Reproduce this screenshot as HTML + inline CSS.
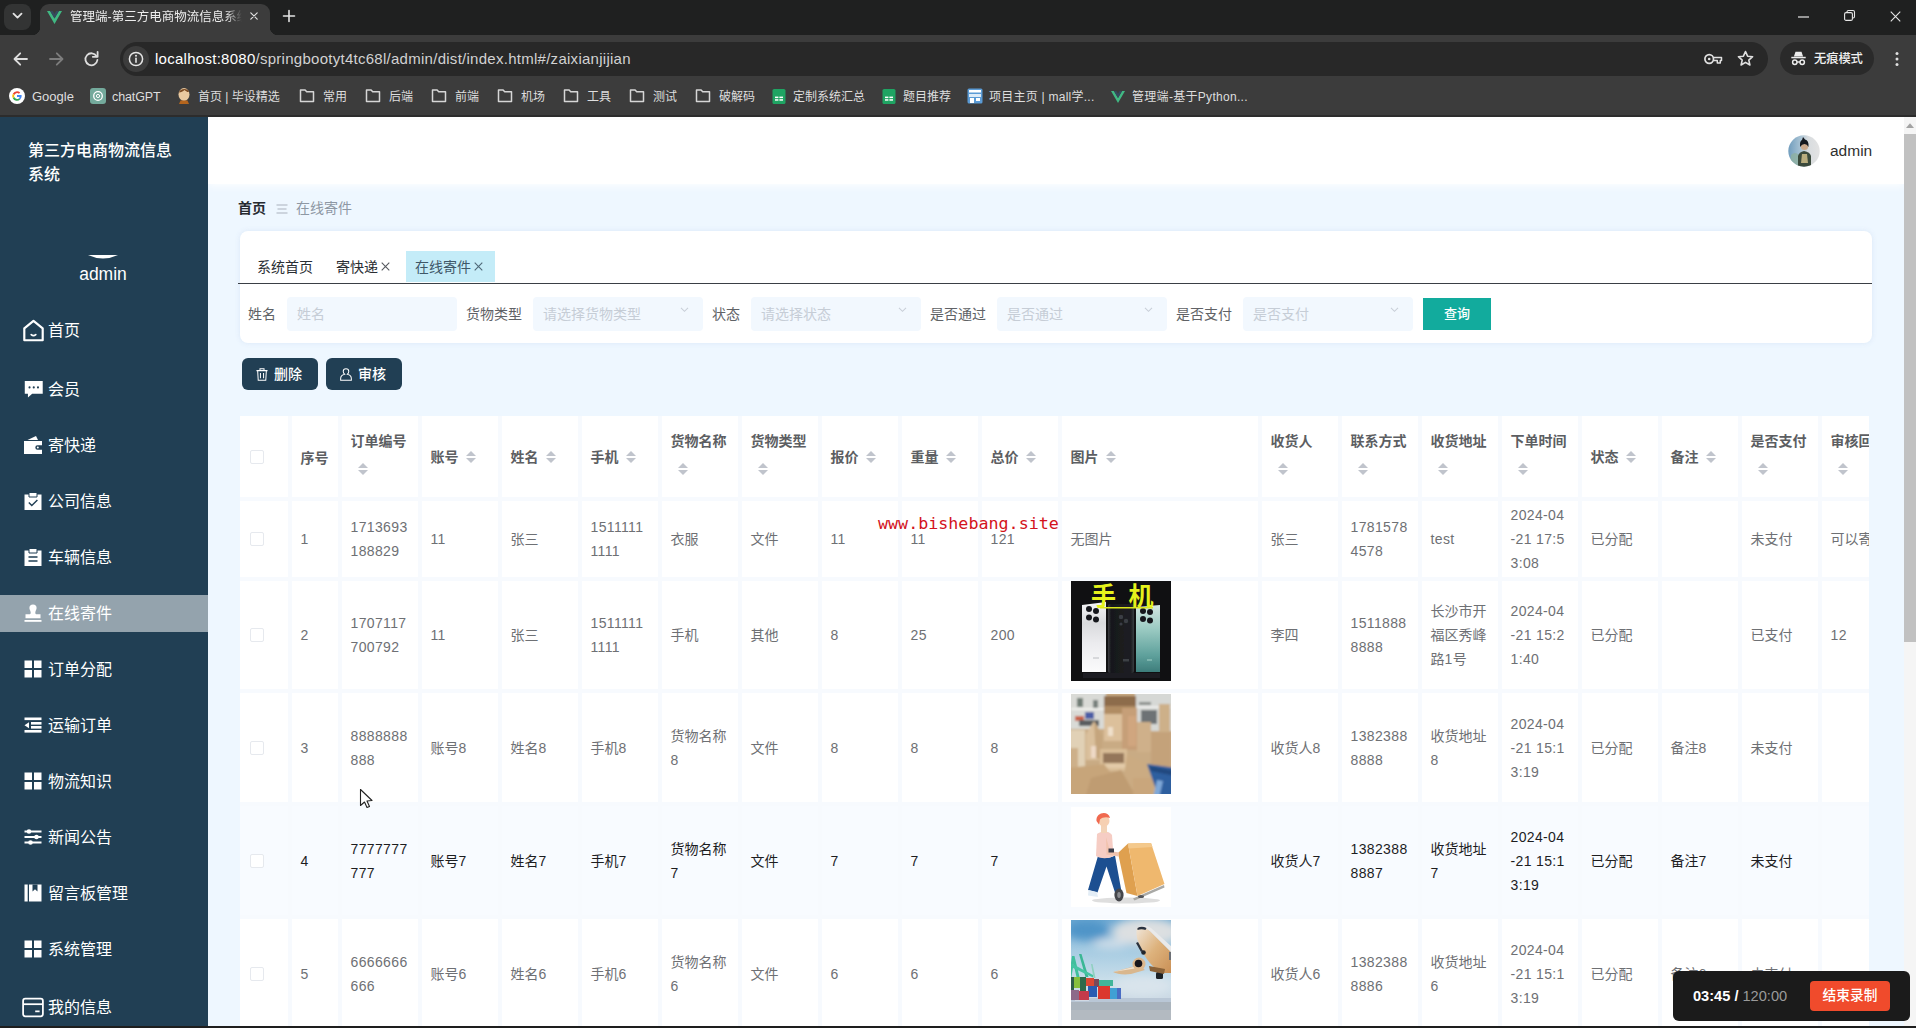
<!DOCTYPE html>
<html lang="zh-CN">
<head>
<meta charset="utf-8">
<title>管理端-第三方电商物流信息系统</title>
<style>
*{box-sizing:border-box;margin:0;padding:0}
html,body{width:1916px;height:1028px;overflow:hidden;background:#eef7ff}
body{position:relative;font-family:"Liberation Sans","Noto Sans CJK SC",sans-serif;font-size:14px;color:#606266}
.a{position:absolute;white-space:nowrap}
svg{position:absolute;overflow:visible}
/* browser chrome */
#chrome{position:absolute;left:0;top:0;width:1916px;height:117px;z-index:5;border-bottom:2px solid #2c2c2c;background:#3c3c3c;color:#e3e3e3}
#tabstrip{position:absolute;left:0;top:0;width:1916px;height:35px;background:#1f2020}
#tab{position:absolute;left:40px;top:4px;width:230px;height:31px;background:#3c3c3c;border-radius:9px 9px 0 0}
#tab:before,#tab:after{content:"";position:absolute;bottom:0;width:8px;height:8px}
#tab:before{left:-8px;background:radial-gradient(circle at 0 0,transparent 8px,#3c3c3c 8.5px)}
#tab:after{right:-8px;background:radial-gradient(circle at 100% 0,transparent 8px,#3c3c3c 8.5px)}
#urlbar{position:absolute;left:120px;top:42px;width:1648px;height:34px;border-radius:17px;background:#282828}
.bm{position:absolute;top:88px;height:18px;line-height:18px;font-size:12px;color:#dedede;white-space:nowrap}
/* sidebar */
#side{z-index:2;position:absolute;left:0;top:116px;width:208px;height:912px;background:#213f54;color:#fff}
.mi{position:absolute;left:0;width:208px;height:37px;line-height:37px;font-size:16px;color:#fff;padding-left:48px;white-space:nowrap}
.mi svg{left:22px;top:8px;width:22px;height:22px}
.mi.act{background:#94a3ad}
/* main */
#hdr{position:absolute;left:208px;top:116px;width:1696px;height:68px;background:#fff;box-shadow:0 2px 8px rgba(255,255,255,.9)}
#sb{position:absolute;left:1904px;top:116px;width:12px;height:912px;background:#f5f5f5}
#sbt{position:absolute;left:0;top:18px;width:12px;height:508px;background:#c1c1c1}
#card{position:absolute;left:240px;top:231px;width:1632px;height:112px;background:#fff;border-radius:8px;box-shadow:0 0 5px rgba(215,228,245,.9)}
.lbl{position:absolute;top:304px;height:20px;line-height:20px;font-size:14px;color:#606266;white-space:nowrap}
.inp{position:absolute;top:297px;width:170px;height:34px;background:#f2f8fe;border-radius:4px;font-size:14px;color:#c6cdd6;line-height:34px;padding-left:10px;white-space:nowrap}
.btn{position:absolute;top:358px;width:76px;height:32px;border-radius:6px;background:#213f54;color:#fff;font-size:14px;line-height:33px;white-space:nowrap;font-weight:500}
/* table */
#tbl{position:absolute;left:240px;top:416px;width:1629px;height:612px;overflow:hidden;background:#f7fafe}
.c{position:absolute;background:#fff;border:2px solid #f7fafe;font-size:14px;line-height:24px;color:#6e7074;padding-left:8px;padding-right:6px;display:flex;align-items:center;overflow:hidden;word-break:break-all}
.c.h{font-weight:bold;color:#5c5e62;font-size:14px;line-height:23px;border-top-width:0}
.c.c0{border-left-width:0}
.c.hv{background:#f8fbff;color:#1d1d1f}
.cb{display:block;width:14px;height:14px;border:1px solid #e6e9ee;border-radius:2px;background:#fff;margin-left:1px}
.so{display:inline-block;position:relative;width:14px;height:23px;vertical-align:middle;margin-left:3px}
.so:before,.so:after{content:"";position:absolute;left:3px;border:4.5px solid transparent}
.so:before{top:2px;border-bottom-color:#c0c4cc}
.so:after{top:12.5px;border-top-color:#c0c4cc}

.c{padding-left:8.5px}
.c>div{white-space:nowrap}
.n{letter-spacing:.36px}
.s13{font-size:14px}
.c.h>div{padding-top:3px}
.c.ic{padding:0}

.so{display:inline-block;position:relative;width:24px;height:34px;vertical-align:middle;margin:0}
.so:before,.so:after{content:"";position:absolute;left:7px;border:5px solid transparent}
.so:before{top:5px;border-bottom-color:#c0c4cc}
.so:after{top:auto;bottom:7px;border-top-color:#c0c4cc}
</style>
</head>
<body>
<div id="chrome"><div id="tabstrip"></div>
<div class="a" style="left:4px;top:4px;width:27px;height:26px;border-radius:8px;background:#333434"></div>
<svg style="left:12px;top:12px" width="11" height="8" viewBox="0 0 11 8"><path d="M1.5 1.6l4 4 4-4" fill="none" stroke="#e3e3e3" stroke-width="1.8" stroke-linecap="round" stroke-linejoin="round"/></svg>
<div id="tab"></div>
<svg style="left:47px;top:10px" width="15" height="15" viewBox="0 0 16 14"><path d="M0 0h3.3L8 8.1 12.7 0H16L8 13.9z" fill="#41b883"/><path d="M3.3 0h2.9L8 3.2 9.8 0h2.9L8 8.1z" fill="#35495e"/></svg>
<div class="a" style="left:70px;top:7px;width:172px;height:20px;line-height:20px;font-size:12.5px;color:#ececec;overflow:hidden;letter-spacing:0;-webkit-mask-image:linear-gradient(90deg,#000 156px,transparent 172px)">管理端-第三方电商物流信息系统</div>
<svg style="left:250px;top:12px" width="8" height="8" viewBox="0 0 10 10"><path d="M1 1l8 8M9 1l-8 8" stroke="#e3e3e3" stroke-width="1.5" stroke-linecap="round"/></svg>
<svg style="left:283px;top:10px" width="12" height="12" viewBox="0 0 12 12"><path d="M6 0.5v11M0.5 6h11" stroke="#e3e3e3" stroke-width="1.6" stroke-linecap="round"/></svg>
<svg style="left:1798px;top:16px" width="11" height="2" viewBox="0 0 11 2"><path d="M0 1h11" stroke="#e6e6e6" stroke-width="1.2"/></svg>
<svg style="left:1844px;top:10px" width="11" height="11" viewBox="0 0 11 11"><rect x="0.6" y="2.6" width="7.8" height="7.8" rx="1.5" fill="none" stroke="#e6e6e6" stroke-width="1.1"/><path d="M3 2.4V2a1.5 1.5 0 0 1 1.5-1.5H9A1.5 1.5 0 0 1 10.5 2v4.5A1.5 1.5 0 0 1 9 8h-.4" fill="none" stroke="#e6e6e6" stroke-width="1.1"/></svg>
<svg style="left:1890px;top:10.5px" width="11" height="11" viewBox="0 0 12 12"><path d="M0.8 0.8l10.4 10.4M11.2 0.8L0.8 11.2" stroke="#e6e6e6" stroke-width="1.2"/></svg>
<svg style="left:13px;top:52px" width="15" height="14" viewBox="0 0 15 14"><path d="M14 7H2M7.2 1.3L1.5 7l5.7 5.7" fill="none" stroke="#dedede" stroke-width="1.8" stroke-linecap="round" stroke-linejoin="round"/></svg>
<svg style="left:49px;top:52px" width="15" height="14" viewBox="0 0 15 14"><path d="M1 7h12M7.8 1.3L13.5 7l-5.7 5.7" fill="none" stroke="#7d7d7d" stroke-width="1.8" stroke-linecap="round" stroke-linejoin="round"/></svg>
<svg style="left:84px;top:51px" width="15" height="16" viewBox="0 0 15 16"><path d="M12.6 5.2A6 6 0 1 0 13.4 9" fill="none" stroke="#dedede" stroke-width="1.8" stroke-linecap="round"/><path d="M13.6 1v4.8H8.8" fill="none" stroke="#dedede" stroke-width="1.8" stroke-linecap="round" stroke-linejoin="round"/></svg>
<div id="urlbar"></div>
<div class="a" style="left:123px;top:46px;width:26px;height:26px;border-radius:13px;background:#3c3c3c"></div>
<svg style="left:128px;top:51px" width="16" height="16" viewBox="0 0 16 16"><circle cx="8" cy="8" r="6.6" fill="none" stroke="#e6e6e6" stroke-width="1.5"/><path d="M8 7.2v4" stroke="#e6e6e6" stroke-width="1.6" stroke-linecap="round"/><circle cx="8" cy="4.8" r="1" fill="#e6e6e6"/></svg>
<div class="a" id="url" style="left:155px;top:49px;height:20px;line-height:20px;font-size:15px;color:#e6e6e6;letter-spacing:.27px"><span style="color:#fff">localhost:8080</span><span style="color:#d2d2d2">/springbootyt4tc68l/admin/dist/index.html#/zaixianjijian</span></div>
<svg style="left:1704px;top:53px" width="19" height="12" viewBox="0 0 19 12"><circle cx="5.2" cy="6" r="4.3" fill="none" stroke="#e0e0e0" stroke-width="1.7"/><circle cx="5.2" cy="6" r="1.3" fill="#e0e0e0"/><path d="M9.5 4.6h8v3h-1.2v2.3h-3V7.4H9.5" fill="none" stroke="#e0e0e0" stroke-width="1.5" stroke-linejoin="round"/></svg>
<svg style="left:1737px;top:50px" width="17" height="17" viewBox="0 0 17 17"><path d="M8.5 1.6l2.1 4.6 5 .5-3.8 3.4 1.1 4.9-4.4-2.6L4.1 15l1.1-4.9L1.4 6.7l5-.5z" fill="none" stroke="#e0e0e0" stroke-width="1.6" stroke-linejoin="round"/></svg>
<div class="a" style="left:1780px;top:42px;width:94px;height:33px;border-radius:17px;background:#2a2a2a"></div>
<svg style="left:1791px;top:51px" width="15" height="15" viewBox="0 0 15 15"><path d="M4.5 0.8h6l1.6 4.6H2.9z" fill="#ececec"/><rect x="0.3" y="5.8" width="14.4" height="1.5" fill="#ececec"/><circle cx="3.8" cy="11.3" r="2.2" fill="none" stroke="#ececec" stroke-width="1.5"/><circle cx="11.2" cy="11.3" r="2.2" fill="none" stroke="#ececec" stroke-width="1.5"/><path d="M6 11h3" stroke="#ececec" stroke-width="1.4"/></svg>
<div class="a" style="left:1814px;top:49px;height:20px;line-height:20px;font-size:12.3px;color:#f0f0f0;font-weight:500;letter-spacing:-.1px">无痕模式</div>
<svg style="left:1895px;top:51px" width="4" height="16" viewBox="0 0 4 16"><circle cx="2" cy="2.4" r="1.5" fill="#e0e0e0"/><circle cx="2" cy="8" r="1.5" fill="#e0e0e0"/><circle cx="2" cy="13.6" r="1.5" fill="#e0e0e0"/></svg>
<svg style="left:9px;top:88px" width="16" height="16" viewBox="0 0 16 16"><circle cx="8" cy="8" r="8" fill="#fff"/><path d="M8 3.3a4.7 4.7 0 0 1 3.2 1.2l-1.3 1.3A2.9 2.9 0 0 0 5.3 7L3.8 5.8A4.7 4.7 0 0 1 8 3.3z" fill="#ea4335"/><path d="M3.8 5.8L5.3 7a2.9 2.9 0 0 0 0 2l-1.5 1.2a4.7 4.7 0 0 1 0-4.4z" fill="#fbbc05"/><path d="M3.8 10.2L5.3 9A2.9 2.9 0 0 0 9.7 10.4l1.5 1.2a4.7 4.7 0 0 1-7.4-1.4z" fill="#34a853"/><path d="M12.6 7.1H8v1.8h2.7a2.3 2.3 0 0 1-1 1.5l1.5 1.2a4.7 4.7 0 0 0 1.4-4.5z" fill="#4285f4"/></svg>
<div class="bm" style="left:32px;font-size:13px;letter-spacing:0">Google</div>
<svg style="left:90px;top:88px" width="16" height="16" viewBox="0 0 16 16"><rect width="16" height="16" rx="3" fill="#74aa9c"/><circle cx="8" cy="8" r="4.3" fill="none" stroke="#fff" stroke-width="1.3"/><circle cx="8" cy="8" r="1.6" fill="none" stroke="#fff" stroke-width="1"/></svg>
<div class="bm" style="left:112px;font-size:12.5px;letter-spacing:-.1px">chatGPT</div>
<svg style="left:176px;top:87px" width="16" height="17" viewBox="0 0 16 17"><ellipse cx="8" cy="7.5" rx="5.5" ry="6.5" fill="#e9c9a0"/><path d="M3 5.5C3.5 1.5 12 0.5 13 5c-2 .5-3-1-4.5-2C7 4.5 5 5.5 3 5.5z" fill="#7a4a22"/><path d="M4.5 13.5h7l1.5 3.5h-10z" fill="#b5651d"/></svg>
<div class="bm" style="left:198px">首页 | 毕设精选</div>
<svg style="left:299px;top:89px" width="16" height="14" viewBox="0 0 16 14"><path d="M1.5 1h4.6l1.6 1.8h6.8v9.7h-13z" fill="none" stroke="#d6d6d6" stroke-width="1.5" stroke-linejoin="round"/></svg>
<div class="bm" style="left:323px">常用</div>
<svg style="left:365px;top:89px" width="16" height="14" viewBox="0 0 16 14"><path d="M1.5 1h4.6l1.6 1.8h6.8v9.7h-13z" fill="none" stroke="#d6d6d6" stroke-width="1.5" stroke-linejoin="round"/></svg>
<div class="bm" style="left:389px">后端</div>
<svg style="left:431px;top:89px" width="16" height="14" viewBox="0 0 16 14"><path d="M1.5 1h4.6l1.6 1.8h6.8v9.7h-13z" fill="none" stroke="#d6d6d6" stroke-width="1.5" stroke-linejoin="round"/></svg>
<div class="bm" style="left:455px">前端</div>
<svg style="left:497px;top:89px" width="16" height="14" viewBox="0 0 16 14"><path d="M1.5 1h4.6l1.6 1.8h6.8v9.7h-13z" fill="none" stroke="#d6d6d6" stroke-width="1.5" stroke-linejoin="round"/></svg>
<div class="bm" style="left:521px">机场</div>
<svg style="left:563px;top:89px" width="16" height="14" viewBox="0 0 16 14"><path d="M1.5 1h4.6l1.6 1.8h6.8v9.7h-13z" fill="none" stroke="#d6d6d6" stroke-width="1.5" stroke-linejoin="round"/></svg>
<div class="bm" style="left:587px">工具</div>
<svg style="left:629px;top:89px" width="16" height="14" viewBox="0 0 16 14"><path d="M1.5 1h4.6l1.6 1.8h6.8v9.7h-13z" fill="none" stroke="#d6d6d6" stroke-width="1.5" stroke-linejoin="round"/></svg>
<div class="bm" style="left:653px">测试</div>
<svg style="left:695px;top:89px" width="16" height="14" viewBox="0 0 16 14"><path d="M1.5 1h4.6l1.6 1.8h6.8v9.7h-13z" fill="none" stroke="#d6d6d6" stroke-width="1.5" stroke-linejoin="round"/></svg>
<div class="bm" style="left:719px">破解码</div>
<svg style="left:772px;top:89px" width="14" height="15" viewBox="0 0 14 15"><rect x="0.5" y="0" width="13" height="15" rx="1.6" fill="#1fa463"/><rect x="3" y="7.6" width="3.4" height="1.5" fill="#fff"/><rect x="7.4" y="7.6" width="3.6" height="1.5" fill="#fff"/><rect x="3" y="10.2" width="3.4" height="1.5" fill="#fff"/><rect x="7.4" y="10.2" width="3.6" height="1.5" fill="#fff"/></svg>
<div class="bm" style="left:793px">定制系统汇总</div>
<svg style="left:882px;top:89px" width="14" height="15" viewBox="0 0 14 15"><rect x="0.5" y="0" width="13" height="15" rx="1.6" fill="#1fa463"/><rect x="3" y="7.6" width="3.4" height="1.5" fill="#fff"/><rect x="7.4" y="7.6" width="3.6" height="1.5" fill="#fff"/><rect x="3" y="10.2" width="3.4" height="1.5" fill="#fff"/><rect x="7.4" y="10.2" width="3.6" height="1.5" fill="#fff"/></svg>
<div class="bm" style="left:903px">题目推荐</div>
<svg style="left:967px;top:88px" width="16" height="16" viewBox="0 0 16 16"><rect x="0.5" y="0.5" width="15" height="15" rx="1.5" fill="#5b9bd5"/><rect x="2" y="2" width="12" height="2.5" fill="#fff"/><path d="M2 6h12v3H2z" fill="#dcebf8"/><rect x="3" y="10" width="4" height="5" fill="#fff"/><rect x="9" y="10" width="4" height="3" fill="#fff"/></svg>
<div class="bm" style="left:989px;letter-spacing:.25px">项目主页 | mall学...</div>
<svg style="left:1111px;top:90px" width="14" height="14" viewBox="0 0 16 14"><path d="M0 0h3.3L8 8.1 12.7 0H16L8 13.9z" fill="#41b883"/><path d="M3.3 0h2.9L8 3.2 9.8 0h2.9L8 8.1z" fill="#35495e"/></svg>
<div class="bm" style="left:1132px;letter-spacing:.3px">管理端-基于Python...</div>
</div>
<div id="side">
<div class="a" style="left:28px;top:22.5px;width:160px;white-space:normal;font-size:16px;line-height:24px;color:#fff;font-weight:500">第三方电商物流信息<br>系统</div>
<svg style="left:88px;top:139px" width="30" height="4" viewBox="0 0 30 4"><path d="M0 0h30Q15 7 0 0z" fill="#fff"/></svg>
<div class="a" style="left:0;top:146px;width:206px;text-align:center;font-size:17.5px;line-height:24px;color:#fff">admin</div>
<div class="mi" style="top:196px"><svg viewBox="0 0 18 18" style="left:21.5px;top:6.5px;width:23px;height:23px"><path d="M9 1.5L1.8 7.4V16.6H16.2V7.4z" fill="none" stroke="#fff" stroke-width="1.7" stroke-linejoin="round"/><path d="M7.2 12.2c1 .9 2.6.9 3.6 0" fill="none" stroke="#fff" stroke-width="1.3" stroke-linecap="round"/></svg>首页</div>
<div class="mi" style="top:255px"><svg viewBox="0 0 18 18" style="left:23.5px;top:9px;width:19.5px;height:19px"><path d="M0.5 1h17v12H7.5L3.5 16.5V13H0.5z" fill="#fff"/><circle cx="5" cy="7" r="1" fill="#213f54"/><circle cx="9" cy="7" r="1" fill="#213f54"/><circle cx="13" cy="7" r="1" fill="#213f54"/></svg>会员</div>
<div class="mi" style="top:311px"><svg viewBox="0 0 18 18" style="left:24px;top:9px;width:18px;height:18px"><path d="M0 5h18v13H0z" fill="#fff"/><path d="M3.5 4L12 0l2 4z" fill="#fff"/><path d="M18 9.3h-4.5a2.2 2.2 0 0 0 0 4.4H18z" fill="#213f54"/><circle cx="13.8" cy="11.5" r="1" fill="#fff"/></svg>寄快递</div>
<div class="mi" style="top:367px"><svg viewBox="0 0 18 18" style="left:24px;top:9px;width:18px;height:18px"><path d="M0.5 2.5h17V18h-17z" fill="#fff"/><path d="M5 0.5h8V5H5z" fill="#fff" stroke="#213f54" stroke-width="1"/><path d="M4.8 10.5l3 3 5.6-5.6" fill="none" stroke="#213f54" stroke-width="1.4"/></svg>公司信息</div>
<div class="mi" style="top:423px"><svg viewBox="0 0 18 18" style="left:24px;top:9px;width:18px;height:18px"><path d="M0.5 2.5h17V18h-17z" fill="#fff"/><path d="M5 0.5h8V5H5z" fill="#fff" stroke="#213f54" stroke-width="1"/><path d="M4.5 9h9M4.5 13h9" stroke="#213f54" stroke-width="1.6"/></svg>车辆信息</div>
<div class="mi act" style="top:479px"><svg viewBox="0 0 18 18" style="left:24px;top:9px;width:18px;height:18px"><path d="M9 0.5a3.6 3.6 0 0 1 3.6 3.6c0 1.8-1.3 2.8-1.3 4.6 0 1 .6 1.6 1.6 1.6H16.5v4h-15v-4h3.6c1 0 1.6-.6 1.6-1.6 0-1.8-1.3-2.8-1.3-4.6A3.6 3.6 0 0 1 9 0.5z" fill="#fff"/><rect x="0.5" y="16" width="17" height="1.8" fill="#fff"/></svg>在线寄件</div>
<div class="mi" style="top:535px"><svg viewBox="0 0 18 18" style="left:24px;top:9px;width:18px;height:18px"><rect x="0.5" y="0.5" width="7.5" height="7.5" fill="#fff"/><rect x="10" y="0.5" width="7.5" height="7.5" fill="#fff"/><rect x="0.5" y="10" width="7.5" height="7.5" fill="#fff"/><rect x="10" y="10" width="7.5" height="7.5" fill="#fff"/></svg>订单分配</div>
<div class="mi" style="top:591px"><svg viewBox="0 0 18 18" style="left:24px;top:9px;width:18px;height:18px"><rect x="0.5" y="1.5" width="17" height="2.6" fill="#fff"/><rect x="7" y="6" width="10.5" height="2.6" fill="#fff"/><rect x="7" y="10" width="10.5" height="2.6" fill="#fff"/><rect x="0.5" y="14" width="17" height="2.6" fill="#fff"/><path d="M0.5 9.3L5 6.3v6z" fill="#fff"/></svg>运输订单</div>
<div class="mi" style="top:647px"><svg viewBox="0 0 18 18" style="left:24px;top:9px;width:18px;height:18px"><rect x="0.5" y="0.5" width="7.5" height="7.5" fill="#fff"/><rect x="10" y="0.5" width="7.5" height="7.5" fill="#fff"/><rect x="0.5" y="10" width="7.5" height="7.5" fill="#fff"/><rect x="10" y="10" width="7.5" height="7.5" fill="#fff"/></svg>物流知识</div>
<div class="mi" style="top:703px"><svg viewBox="0 0 18 18" style="left:24px;top:9px;width:18px;height:18px"><path d="M0.5 3.5h17M0.5 9h17M0.5 14.5h17" stroke="#fff" stroke-width="1.8"/><circle cx="5" cy="3.5" r="2.3" fill="#fff"/><circle cx="12.5" cy="9" r="2.3" fill="#fff"/><circle cx="6.5" cy="14.5" r="2.3" fill="#fff"/></svg>新闻公告</div>
<div class="mi" style="top:759px"><svg viewBox="0 0 18 18" style="left:24px;top:9px;width:18px;height:18px"><rect x="0.5" y="0.5" width="3.2" height="17" fill="#fff"/><path d="M5 0.5h12.5v17H5z" fill="#fff"/><path d="M8.5 0.5v7l2.5-2.2 2.5 2.2v-7z" fill="#213f54"/></svg>留言板管理</div>
<div class="mi" style="top:815px"><svg viewBox="0 0 18 18" style="left:24px;top:9px;width:18px;height:18px"><rect x="0.5" y="0.5" width="7.5" height="7.5" fill="#fff"/><rect x="10" y="0.5" width="7.5" height="7.5" fill="#fff"/><rect x="0.5" y="10" width="7.5" height="7.5" fill="#fff"/><rect x="10" y="10" width="7.5" height="7.5" fill="#fff"/></svg>系统管理</div>
<div class="mi" style="top:873px"><svg viewBox="0 0 20 19" style="left:22px;top:8px;width:22px;height:21px"><rect x="1" y="1.5" width="18" height="16" rx="2" fill="none" stroke="#fff" stroke-width="1.6"/><path d="M1 6.5h18" stroke="#fff" stroke-width="1.6"/><path d="M12 13h4" stroke="#fff" stroke-width="1.6"/></svg>我的信息</div>
</div>
<div id="hdr"></div>
<svg style="left:1787.5px;top:135px" width="32" height="32" viewBox="0 0 32 32"><defs><clipPath id="av"><circle cx="16" cy="16" r="15.7"/></clipPath><linearGradient id="avg" x1="0" y1="0" x2="1" y2="0"><stop offset="0" stop-color="#6f9cbd"/><stop offset=".4" stop-color="#a9c3d4"/><stop offset=".62" stop-color="#d8dcdf"/><stop offset="1" stop-color="#e3e3e3"/></linearGradient></defs><g clip-path="url(#av)"><rect width="32" height="32" fill="url(#avg)"/><path d="M3 20q4-4 8 0l2 12H2z" fill="#8fb0a0" opacity=".8"/><path d="M10 32V21q1-4 6-5 6 1 7 5v11z" fill="#3b4a3c"/><path d="M14 19h5l1 9h-7z" fill="#b9ad7e"/><circle cx="16.5" cy="11.5" r="3.6" fill="#caa98c"/><path d="M12 12q-.5-6 2-7l1-3 2 2.5q4 .5 3.5 7.5-1.5-3-4-3t-4.5 3z" fill="#14181f"/></g></svg>
<div class="a" style="left:1830px;top:140px;height:22px;line-height:22px;font-size:15.5px;color:#2f2f2f">admin</div>
<div class="a" style="left:238px;top:198px;height:20px;line-height:20px;font-size:14px;font-weight:bold;color:#262a30">首页</div>
<svg style="left:276px;top:204px" width="12" height="10" viewBox="0 0 12 10"><path d="M0.5 1h11M1.5 5h9M0.5 9h11" stroke="#a9b2bd" stroke-width="1.1"/></svg>
<div class="a" style="left:296px;top:198px;height:20px;line-height:20px;font-size:14px;color:#8e98a4">在线寄件</div>
<div id="card"></div>
<div class="a" style="left:238px;top:283px;width:1634px;height:1px;background:#3a3f45"></div>
<div class="a" style="left:257px;top:257px;height:20px;line-height:20px;font-size:14px;color:#2a2e33">系统首页</div>
<div class="a" style="left:336px;top:257px;height:20px;line-height:20px;font-size:14px;color:#2a2e33">寄快递</div>
<svg style="left:381px;top:262px" width="9" height="9" viewBox="0 0 9 9"><path d="M0.7 0.7l7.6 7.6M8.3 0.7L0.7 8.3" stroke="#55595f" stroke-width="1.1"/></svg>
<div class="a" style="left:406px;top:251px;width:89px;height:31px;background:#c4ecf8"></div>
<div class="a" style="left:415px;top:257px;height:20px;line-height:20px;font-size:14px;color:#3f5868">在线寄件</div>
<svg style="left:474px;top:262px" width="9" height="9" viewBox="0 0 9 9"><path d="M0.7 0.7l7.6 7.6M8.3 0.7L0.7 8.3" stroke="#4f6878" stroke-width="1.1"/></svg>
<div class="lbl" style="left:248px">姓名</div>
<div class="inp" style="left:287px">姓名</div>
<div class="lbl" style="left:466px">货物类型</div>
<div class="inp" style="left:533px">请选择货物类型</div><svg style="left:679.5px;top:306.5px" width="9" height="5.5" viewBox="0 0 11 7"><path d="M1 1l4.5 4.5L10 1" fill="none" stroke="#c9cfd8" stroke-width="1.3"/></svg>
<div class="lbl" style="left:712px">状态</div>
<div class="inp" style="left:751px">请选择状态</div><svg style="left:897.5px;top:306.5px" width="9" height="5.5" viewBox="0 0 11 7"><path d="M1 1l4.5 4.5L10 1" fill="none" stroke="#c9cfd8" stroke-width="1.3"/></svg>
<div class="lbl" style="left:930px">是否通过</div>
<div class="inp" style="left:997px">是否通过</div><svg style="left:1143.5px;top:306.5px" width="9" height="5.5" viewBox="0 0 11 7"><path d="M1 1l4.5 4.5L10 1" fill="none" stroke="#c9cfd8" stroke-width="1.3"/></svg>
<div class="lbl" style="left:1176px">是否支付</div>
<div class="inp" style="left:1243px">是否支付</div><svg style="left:1389.5px;top:306.5px" width="9" height="5.5" viewBox="0 0 11 7"><path d="M1 1l4.5 4.5L10 1" fill="none" stroke="#c9cfd8" stroke-width="1.3"/></svg>
<div class="a" style="left:1423px;top:298px;width:68px;height:32px;background:#12ab9d;color:#fff;font-size:13px;line-height:32px;text-align:center;font-weight:500">查询</div>
<div class="btn" style="left:242px;padding-left:32px">删除</div>
<svg style="left:255.5px;top:368px" width="12" height="13" viewBox="0 0 13 14"><path d="M0.5 2.8h12M4.3 2.5V0.8h4.4v1.7M1.8 3l.6 10.2h8.2L11.2 3M4.8 5.5v5.5M8.2 5.5v5.5" fill="none" stroke="#fff" stroke-width="1.1"/></svg>
<div class="btn" style="left:326px;padding-left:32px">审核</div>
<svg style="left:339.5px;top:368px" width="12" height="13" viewBox="0 0 13 14"><path d="M6.5 0.7a3 3 0 0 1 3 3c0 1.5-.9 2.5-1.5 3 2.5.5 4.3 2.3 4.3 4.8v1.8H0.7v-1.8c0-2.5 1.8-4.3 4.3-4.8-.6-.5-1.5-1.5-1.5-3a3 3 0 0 1 3-3z" fill="none" stroke="#fff" stroke-width="1.1"/></svg>
<div id="sb"><div id="sbt"></div><svg style="left:2px;top:7px" width="8" height="5" viewBox="0 0 8 5"><path d="M4 0.3L8 5h-8z" fill="#a3a3a3"/></svg></div>
<div id="tbl">
<div class="c h c0" style="left:0px;top:0px;width:50px;height:83px"><i class="cb"></i></div>
<div class="c h" style="left:50px;top:0px;width:50px;height:83px"><div>序号</div></div>
<div class="c h" style="left:100px;top:0px;width:80px;height:83px"><div>订单编号<br><i class="so"></i></div></div>
<div class="c h" style="left:180px;top:0px;width:80px;height:83px"><div>账号<i class="so"></i></div></div>
<div class="c h" style="left:260px;top:0px;width:80px;height:83px"><div>姓名<i class="so"></i></div></div>
<div class="c h" style="left:340px;top:0px;width:80px;height:83px"><div>手机<i class="so"></i></div></div>
<div class="c h" style="left:420px;top:0px;width:80px;height:83px"><div>货物名称<br><i class="so"></i></div></div>
<div class="c h" style="left:500px;top:0px;width:80px;height:83px"><div>货物类型<br><i class="so"></i></div></div>
<div class="c h" style="left:580px;top:0px;width:80px;height:83px"><div>报价<i class="so"></i></div></div>
<div class="c h" style="left:660px;top:0px;width:80px;height:83px"><div>重量<i class="so"></i></div></div>
<div class="c h" style="left:740px;top:0px;width:80px;height:83px"><div>总价<i class="so"></i></div></div>
<div class="c h" style="left:820px;top:0px;width:200px;height:83px"><div>图片<i class="so"></i></div></div>
<div class="c h" style="left:1020px;top:0px;width:80px;height:83px"><div>收货人<br><i class="so"></i></div></div>
<div class="c h" style="left:1100px;top:0px;width:80px;height:83px"><div>联系方式<br><i class="so"></i></div></div>
<div class="c h" style="left:1180px;top:0px;width:80px;height:83px"><div>收货地址<br><i class="so"></i></div></div>
<div class="c h" style="left:1260px;top:0px;width:80px;height:83px"><div>下单时间<br><i class="so"></i></div></div>
<div class="c h" style="left:1340px;top:0px;width:80px;height:83px"><div>状态<i class="so"></i></div></div>
<div class="c h" style="left:1420px;top:0px;width:80px;height:83px"><div>备注<i class="so"></i></div></div>
<div class="c h" style="left:1500px;top:0px;width:80px;height:83px"><div>是否支付<br><i class="so"></i></div></div>
<div class="c h" style="left:1580px;top:0px;width:80px;height:83px"><div>审核回复<br><i class="so"></i></div></div>
<div class="c c0" style="left:0px;top:83px;width:50px;height:80px"><i class="cb"></i></div>
<div class="c" style="left:50px;top:83px;width:50px;height:80px"><div><span class="n">1</span></div></div>
<div class="c" style="left:100px;top:83px;width:80px;height:80px"><div><span class="n">1713693<br>188829</span></div></div>
<div class="c" style="left:180px;top:83px;width:80px;height:80px"><div><span class="n">11</span></div></div>
<div class="c" style="left:260px;top:83px;width:80px;height:80px"><div>张三</div></div>
<div class="c" style="left:340px;top:83px;width:80px;height:80px"><div><span class="n">1511111<br>1111</span></div></div>
<div class="c" style="left:420px;top:83px;width:80px;height:80px"><div>衣服</div></div>
<div class="c" style="left:500px;top:83px;width:80px;height:80px"><div>文件</div></div>
<div class="c" style="left:580px;top:83px;width:80px;height:80px"><div><span class="n">11</span></div></div>
<div class="c" style="left:660px;top:83px;width:80px;height:80px"><div><span class="n">11</span></div></div>
<div class="c" style="left:740px;top:83px;width:80px;height:80px"><div><span class="n">121</span></div></div>
<div class="c" style="left:820px;top:83px;width:200px;height:80px"><div>无图片</div></div>
<div class="c" style="left:1020px;top:83px;width:80px;height:80px"><div>张三</div></div>
<div class="c" style="left:1100px;top:83px;width:80px;height:80px"><div><span class="n">1781578<br>4578</span></div></div>
<div class="c" style="left:1180px;top:83px;width:80px;height:80px"><div><span class="n">test</span></div></div>
<div class="c" style="left:1260px;top:83px;width:80px;height:80px"><div><span class="n">2024-04<br>-21 17:5<br>3:08</span></div></div>
<div class="c" style="left:1340px;top:83px;width:80px;height:80px"><div>已分配</div></div>
<div class="c" style="left:1420px;top:83px;width:80px;height:80px"><div></div></div>
<div class="c" style="left:1500px;top:83px;width:80px;height:80px"><div>未支付</div></div>
<div class="c" style="left:1580px;top:83px;width:80px;height:80px"><div>可以寄</div></div>
<div class="c c0" style="left:0px;top:163px;width:50px;height:112px"><i class="cb"></i></div>
<div class="c" style="left:50px;top:163px;width:50px;height:112px"><div><span class="n">2</span></div></div>
<div class="c" style="left:100px;top:163px;width:80px;height:112px"><div><span class="n">1707117<br>700792</span></div></div>
<div class="c" style="left:180px;top:163px;width:80px;height:112px"><div><span class="n">11</span></div></div>
<div class="c" style="left:260px;top:163px;width:80px;height:112px"><div>张三</div></div>
<div class="c" style="left:340px;top:163px;width:80px;height:112px"><div><span class="n">1511111<br>1111</span></div></div>
<div class="c" style="left:420px;top:163px;width:80px;height:112px"><div>手机</div></div>
<div class="c" style="left:500px;top:163px;width:80px;height:112px"><div>其他</div></div>
<div class="c" style="left:580px;top:163px;width:80px;height:112px"><div><span class="n">8</span></div></div>
<div class="c" style="left:660px;top:163px;width:80px;height:112px"><div><span class="n">25</span></div></div>
<div class="c" style="left:740px;top:163px;width:80px;height:112px"><div><span class="n">200</span></div></div>
<div class="c ic" style="left:820px;top:163px;width:200px;height:112px"><svg class="im" style="left:8.5px;top:0px" width="100" height="100" viewBox="0 0 100 100"><defs><filter id="b1" x="-5%" y="-5%" width="110%" height="110%"><feGaussianBlur stdDeviation=".5"/></filter>
<linearGradient id="pw" x1="0" y1="0" x2="0" y2="1"><stop offset="0" stop-color="#f4f4f6"/><stop offset=".3" stop-color="#d9dadd"/><stop offset=".6" stop-color="#ececef"/><stop offset="1" stop-color="#fbfbfc"/></linearGradient>
<linearGradient id="pt" x1="0" y1="0" x2="0" y2="1"><stop offset="0" stop-color="#d3e6e1"/><stop offset=".35" stop-color="#9ccbc3"/><stop offset=".75" stop-color="#5fa19c"/><stop offset="1" stop-color="#3d7d7b"/></linearGradient>
<linearGradient id="pb" x1="0" y1="0" x2="1" y2="0"><stop offset="0" stop-color="#3a3c40"/><stop offset=".12" stop-color="#17181b"/><stop offset=".88" stop-color="#1d1f22"/><stop offset="1" stop-color="#3a3c40"/></linearGradient></defs>
<rect width="100" height="100" fill="#101012"/>
<g filter="url(#b1)"><path d="M11 24l24-3v70H11z" fill="url(#pw)"/><rect x="37" y="23" width="26" height="69" rx="2" fill="url(#pb)"/><path d="M65 26l24-2v67H65z" fill="url(#pt)"/>
<g fill="#17191d"><circle cx="18" cy="28" r="3"/><circle cx="25" cy="30" r="3"/><circle cx="18" cy="36.5" r="3"/><circle cx="25" cy="38.5" r="3"/>
<circle cx="72" cy="30" r="3"/><circle cx="79" cy="31" r="3"/><circle cx="72" cy="38" r="3"/><circle cx="79" cy="39.5" r="3"/></g>
<g fill="#3b3e44"><circle cx="50" cy="36" r="2.2"/><circle cx="55" cy="40" r="2.2"/><circle cx="50" cy="43" r="1.6"/></g>
<rect x="52" y="78" width="6" height="2.5" fill="#3c3f44"/><rect x="22" y="76" width="6" height="2" fill="#d7d8db"/><rect x="76" y="78" width="5" height="2" fill="#7db5ae"/>
<rect x="12" y="92" width="77" height="5" fill="#1c1d20"/></g>
<text x="20" y="24" font-family="Liberation Sans,Noto Sans CJK SC,sans-serif" font-weight="bold" font-size="25" fill="#e6f31c">手</text><text x="57.5" y="24" font-family="Liberation Sans,Noto Sans CJK SC,sans-serif" font-weight="bold" font-size="25" fill="#e6f31c">机</text>
<rect x="29" y="26" width="53" height="1.5" fill="#dbe81c"/></svg></div>
<div class="c" style="left:1020px;top:163px;width:80px;height:112px"><div>李四</div></div>
<div class="c" style="left:1100px;top:163px;width:80px;height:112px"><div><span class="n">1511888<br>8888</span></div></div>
<div class="c" style="left:1180px;top:163px;width:80px;height:112px"><div><span class="s13">长沙市开<br>福区秀峰<br>路<span class="n">1</span>号</span></div></div>
<div class="c" style="left:1260px;top:163px;width:80px;height:112px"><div><span class="n">2024-04<br>-21 15:2<br>1:40</span></div></div>
<div class="c" style="left:1340px;top:163px;width:80px;height:112px"><div>已分配</div></div>
<div class="c" style="left:1420px;top:163px;width:80px;height:112px"><div></div></div>
<div class="c" style="left:1500px;top:163px;width:80px;height:112px"><div>已支付</div></div>
<div class="c" style="left:1580px;top:163px;width:80px;height:112px"><div><span class="n">12</span></div></div>
<div class="c c0" style="left:0px;top:275px;width:50px;height:113px"><i class="cb"></i></div>
<div class="c" style="left:50px;top:275px;width:50px;height:113px"><div><span class="n">3</span></div></div>
<div class="c" style="left:100px;top:275px;width:80px;height:113px"><div><span class="n">8888888<br>888</span></div></div>
<div class="c" style="left:180px;top:275px;width:80px;height:113px"><div>账号<span class="n">8</span></div></div>
<div class="c" style="left:260px;top:275px;width:80px;height:113px"><div>姓名<span class="n">8</span></div></div>
<div class="c" style="left:340px;top:275px;width:80px;height:113px"><div>手机<span class="n">8</span></div></div>
<div class="c" style="left:420px;top:275px;width:80px;height:113px"><div><span class="s13">货物名称<br><span class="n">8</span></span></div></div>
<div class="c" style="left:500px;top:275px;width:80px;height:113px"><div>文件</div></div>
<div class="c" style="left:580px;top:275px;width:80px;height:113px"><div><span class="n">8</span></div></div>
<div class="c" style="left:660px;top:275px;width:80px;height:113px"><div><span class="n">8</span></div></div>
<div class="c" style="left:740px;top:275px;width:80px;height:113px"><div><span class="n">8</span></div></div>
<div class="c ic" style="left:820px;top:275px;width:200px;height:113px"><svg class="im" style="left:8.5px;top:1px" width="100" height="100" viewBox="0 0 100 100"><defs><filter id="b2" x="-5%" y="-5%" width="110%" height="110%"><feGaussianBlur stdDeviation=".8"/></filter><clipPath id="c2"><rect width="100" height="100"/></clipPath></defs>
<g clip-path="url(#c2)"><g filter="url(#b2)"><rect x="-3" y="-3" width="106" height="106" fill="#c9ab84"/>
<rect x="-3" y="-3" width="38" height="38" fill="#d9dad6"/><rect x="64" y="-3" width="40" height="40" fill="#d6d8d5"/>
<rect x="6" y="4" width="6" height="9" fill="#6f7b74"/><rect x="22" y="6" width="5" height="8" fill="#77807c"/><rect x="0" y="14" width="33" height="2" fill="#f1f1ee"/>
<rect x="14" y="18" width="9" height="7" fill="#4b5da6"/><rect x="4" y="22" width="9" height="5" fill="#c9634a"/><rect x="8" y="26" width="20" height="6" fill="#5a5d60"/>
<rect x="68" y="8" width="12" height="3" fill="#8a8f8c"/><rect x="70" y="16" width="16" height="14" fill="#6d7274"/><rect x="66" y="12" width="34" height="2" fill="#eeeeec"/>
<rect x="88" y="10" width="11" height="38" fill="#cdb089"/>
<path d="M33 2h32v22H33z" fill="#8d6c4b"/><path d="M33 12h32v12H33z" fill="#b08c64"/>
<path d="M33 20h18v27H33z" fill="#dcc09b"/><rect x="37" y="33" width="5" height="9" fill="#efe0cb"/>
<path d="M51 14h15v42H51z" fill="#c69f78"/><path d="M57 22h8v30h-8z" fill="#d0a67f"/>
<path d="M66 28h14v30H66z" fill="#cfb08a"/><path d="M80 38h20v38H80z" fill="#c4a27a"/>
<path d="M15 40l8-13 8 13v26H15z" fill="#dac09c"/><path d="M23 27l8 13v26l-6-2z" fill="#c5a57d"/><rect x="20" y="52" width="5" height="12" fill="#eed9c6"/>
<path d="M-3 36h17v40H-3z" fill="#e1d1b6"/><path d="M-3 54h10v22H-3z" fill="#cdb08a"/>
<path d="M29 55h27v22H29z" fill="#d9bd97"/><path d="M32 59h21v10H32z" fill="#94765a"/><path d="M29 70h27v4H29z" fill="#e2caa8"/>
<path d="M56 60l20 10v34H50z" fill="#cbab82"/><path d="M-3 74l36-4 26 34H-3z" fill="#c7a57a"/><path d="M20 84l30-8 16 28H14z" fill="#bf9c72"/><path d="M62 84h20v20H62z" fill="#c9a67c"/>
<path d="M76 70l28 4v30H88z" fill="#2f5e9f"/><path d="M86 86l6 1-4 17h-6z" fill="#7fa8d8"/><path d="M78 72l26 5v5l-24-5z" fill="#24497f"/>
</g></g></svg></div>
<div class="c" style="left:1020px;top:275px;width:80px;height:113px"><div>收货人<span class="n">8</span></div></div>
<div class="c" style="left:1100px;top:275px;width:80px;height:113px"><div><span class="n">1382388<br>8888</span></div></div>
<div class="c" style="left:1180px;top:275px;width:80px;height:113px"><div><span class="s13">收货地址<br><span class="n">8</span></span></div></div>
<div class="c" style="left:1260px;top:275px;width:80px;height:113px"><div><span class="n">2024-04<br>-21 15:1<br>3:19</span></div></div>
<div class="c" style="left:1340px;top:275px;width:80px;height:113px"><div>已分配</div></div>
<div class="c" style="left:1420px;top:275px;width:80px;height:113px"><div>备注<span class="n">8</span></div></div>
<div class="c" style="left:1500px;top:275px;width:80px;height:113px"><div>未支付</div></div>
<div class="c" style="left:1580px;top:275px;width:80px;height:113px"><div></div></div>
<div class="c hv c0" style="left:0px;top:388px;width:50px;height:113px"><i class="cb"></i></div>
<div class="c hv" style="left:50px;top:388px;width:50px;height:113px"><div><span class="n">4</span></div></div>
<div class="c hv" style="left:100px;top:388px;width:80px;height:113px"><div><span class="n">7777777<br>777</span></div></div>
<div class="c hv" style="left:180px;top:388px;width:80px;height:113px"><div>账号<span class="n">7</span></div></div>
<div class="c hv" style="left:260px;top:388px;width:80px;height:113px"><div>姓名<span class="n">7</span></div></div>
<div class="c hv" style="left:340px;top:388px;width:80px;height:113px"><div>手机<span class="n">7</span></div></div>
<div class="c hv" style="left:420px;top:388px;width:80px;height:113px"><div><span class="s13">货物名称<br><span class="n">7</span></span></div></div>
<div class="c hv" style="left:500px;top:388px;width:80px;height:113px"><div>文件</div></div>
<div class="c hv" style="left:580px;top:388px;width:80px;height:113px"><div><span class="n">7</span></div></div>
<div class="c hv" style="left:660px;top:388px;width:80px;height:113px"><div><span class="n">7</span></div></div>
<div class="c hv" style="left:740px;top:388px;width:80px;height:113px"><div><span class="n">7</span></div></div>
<div class="c hv ic" style="left:820px;top:388px;width:200px;height:113px"><svg class="im" style="left:8.5px;top:1px" width="100" height="100" viewBox="0 0 100 100"><defs><filter id="b3" x="-5%" y="-5%" width="110%" height="110%"><feGaussianBlur stdDeviation=".45"/></filter></defs><rect width="100" height="100" fill="#fff"/>
<g filter="url(#b3)"><ellipse cx="55" cy="93.5" rx="34" ry="3" fill="#dedede"/>
<path d="M62 91.5l31-13.5.500 2.5-30 13z" fill="#a9a9a6"/>
<path d="M47 46l10-9.5 9.5 52.5-11-3z" fill="#dfa04f"/><path d="M57 36.5l23-.500 13.5 41-27 12z" fill="#efb86e"/><path d="M57 36.5l23-.500 1.5 4-23.5 1.5z" fill="#f4c98c"/>
<path d="M27 49c5 2.5 12 2.5 17-.500l6.5 36-6.5 1-8.5-26-9 26-9.5-2.5z" fill="#1e5091"/>
<path d="M26 27c4-3.5 12-3.5 15 1l1.5 21c-5.5 3-12.5 3-17.5 0z" fill="#f6cdc4"/>
<path d="M35 30l4 14 9 1.5-.500 4-12-2z" fill="#f1c3ae"/><rect x="37.5" y="41.5" width="5.5" height="4" fill="#3b3d4a"/>
<path d="M30 17h6v9h-6z" fill="#f3d3b7"/><circle cx="33" cy="14" r="5.5" fill="#f6d0b2"/><path d="M25.5 14c-1-9 12-11 13.5-3-4-1.5-8-.500-10 1.5l-1 5z" fill="#f0694f"/>
<ellipse cx="48" cy="88" rx="4.6" ry="6.5" fill="#45464b"/><ellipse cx="48" cy="88" rx="1.8" ry="3" fill="#8b8c90"/><ellipse cx="70" cy="89.5" rx="3" ry="1.5" fill="#55565a"/>
<path d="M17.5 83l8.5 2 1 5-10-1.5z" fill="#e3edf6"/></g></svg></div>
<div class="c hv" style="left:1020px;top:388px;width:80px;height:113px"><div>收货人<span class="n">7</span></div></div>
<div class="c hv" style="left:1100px;top:388px;width:80px;height:113px"><div><span class="n">1382388<br>8887</span></div></div>
<div class="c hv" style="left:1180px;top:388px;width:80px;height:113px"><div><span class="s13">收货地址<br><span class="n">7</span></span></div></div>
<div class="c hv" style="left:1260px;top:388px;width:80px;height:113px"><div><span class="n">2024-04<br>-21 15:1<br>3:19</span></div></div>
<div class="c hv" style="left:1340px;top:388px;width:80px;height:113px"><div>已分配</div></div>
<div class="c hv" style="left:1420px;top:388px;width:80px;height:113px"><div>备注<span class="n">7</span></div></div>
<div class="c hv" style="left:1500px;top:388px;width:80px;height:113px"><div>未支付</div></div>
<div class="c hv" style="left:1580px;top:388px;width:80px;height:113px"><div></div></div>
<div class="c c0" style="left:0px;top:501px;width:50px;height:113px"><i class="cb"></i></div>
<div class="c" style="left:50px;top:501px;width:50px;height:113px"><div><span class="n">5</span></div></div>
<div class="c" style="left:100px;top:501px;width:80px;height:113px"><div><span class="n">6666666<br>666</span></div></div>
<div class="c" style="left:180px;top:501px;width:80px;height:113px"><div>账号<span class="n">6</span></div></div>
<div class="c" style="left:260px;top:501px;width:80px;height:113px"><div>姓名<span class="n">6</span></div></div>
<div class="c" style="left:340px;top:501px;width:80px;height:113px"><div>手机<span class="n">6</span></div></div>
<div class="c" style="left:420px;top:501px;width:80px;height:113px"><div><span class="s13">货物名称<br><span class="n">6</span></span></div></div>
<div class="c" style="left:500px;top:501px;width:80px;height:113px"><div>文件</div></div>
<div class="c" style="left:580px;top:501px;width:80px;height:113px"><div><span class="n">6</span></div></div>
<div class="c" style="left:660px;top:501px;width:80px;height:113px"><div><span class="n">6</span></div></div>
<div class="c" style="left:740px;top:501px;width:80px;height:113px"><div><span class="n">6</span></div></div>
<div class="c ic" style="left:820px;top:501px;width:200px;height:113px"><svg class="im" style="left:8.5px;top:1px" width="100" height="100" viewBox="0 0 100 100"><defs><filter id="b4" x="-5%" y="-5%" width="110%" height="110%"><feGaussianBlur stdDeviation=".7"/></filter><filter id="b4c" x="-20%" y="-20%" width="140%" height="140%"><feGaussianBlur stdDeviation="4"/></filter><clipPath id="c4"><rect width="100" height="100"/></clipPath>
<linearGradient id="sky" x1="0" y1="0" x2="0" y2="1"><stop offset="0" stop-color="#6ea9d2"/><stop offset=".3" stop-color="#a5cbe2"/><stop offset=".6" stop-color="#c9deea"/><stop offset=".8" stop-color="#cbd8e3"/></linearGradient>
<linearGradient id="fus" x1="0" y1="0" x2="1" y2="1"><stop offset="0" stop-color="#f0e6da"/><stop offset=".5" stop-color="#ddb27c"/><stop offset="1" stop-color="#c98f55"/></linearGradient></defs>
<g clip-path="url(#c4)"><rect width="100" height="100" fill="url(#sky)"/>
<g filter="url(#b4c)"><ellipse cx="75" cy="12" rx="34" ry="14" fill="#dcdfe1"/><ellipse cx="16" cy="10" rx="22" ry="10" fill="#4f94c8"/><ellipse cx="72" cy="66" rx="30" ry="10" fill="#d9e4ec"/><ellipse cx="40" cy="24" rx="18" ry="5" fill="#cfdde8"/></g>
<g filter="url(#b4)"><rect x="-2" y="81" width="104" height="22" fill="#aab4bd"/><rect x="-2" y="78" width="104" height="4" fill="#b9c7d6"/><rect x="-2" y="90" width="104" height="12" fill="#b3bac1"/><rect x="4" y="79" width="14" height="1.5" fill="#e9ecf0"/>
<path d="M1 36l2.5 0 5 21h-3l-3-13-2 13H-2z" fill="#3fbf9c"/><path d="M8 34l2.5 0 7 23h-3z" fill="#3ab795"/><path d="M-2 42l24 13v2.5L-2 46z" fill="#45c4a3"/><path d="M20 44l1.5 0 3 14h-2z" fill="#8fd0c0"/>
<rect x="3" y="57" width="6" height="11" fill="#86bf3d"/><rect x="-1" y="57" width="4" height="13" fill="#2f5d49"/><rect x="9" y="57" width="6" height="14" fill="#2d6a4c"/><rect x="15" y="58" width="8" height="8" fill="#dc4a36"/><rect x="23" y="59" width="5" height="8" fill="#7a4a5a"/>
<rect x="17" y="66" width="9" height="11" fill="#2b5bb2"/><rect x="27" y="66" width="12" height="13" fill="#db372f"/><rect x="39" y="68" width="7" height="11" fill="#3fa0d4"/><rect x="46" y="68" width="4" height="11" fill="#4a6cc4"/><rect x="28" y="60" width="14" height="6" fill="#3fb59a"/>
<rect x="-1" y="70" width="9" height="10" fill="#8d6a8a"/><rect x="8" y="71" width="10" height="9" fill="#c53a4c"/>
<path d="M42 52l26-7 6 5-14 4c-8 1-14 0-18-2z" fill="#d9b78e"/><path d="M42 52l24-6 1 2z" fill="#efe2d0"/>
<path d="M66 8c3-2 8-1 13 3l22 22v20l-8 0c-8-3-16-10-22-22-4-8-7-18-5-23z" fill="url(#fus)"/><path d="M66 8c3-2 8-1 13 3l22 22v-6L80 8c-5-3-10-3-14 0z" fill="#e9e9ea"/><path d="M66.5 8c3-1.8 6-1.5 9 0l-1 2c-3-1-5-1-8 0z" fill="#2a3140"/>
<circle cx="68" cy="44" r="6.5" fill="#dcb88d"/><circle cx="67.5" cy="43.5" r="3.8" fill="#15171b"/><circle cx="72.5" cy="32.5" r="2.3" fill="#22252b"/><path d="M67 22l5 9-2 1-5-9z" fill="#2c303a"/>
<rect x="85" y="52" width="7" height="7" rx="1.5" fill="#1d2026"/><path d="M78 46l16 3-1 5-14-3z" fill="#8a6238"/><rect x="98" y="32" width="2" height="8" fill="#6d6f74"/></g></g></svg></div>
<div class="c" style="left:1020px;top:501px;width:80px;height:113px"><div>收货人<span class="n">6</span></div></div>
<div class="c" style="left:1100px;top:501px;width:80px;height:113px"><div><span class="n">1382388<br>8886</span></div></div>
<div class="c" style="left:1180px;top:501px;width:80px;height:113px"><div><span class="s13">收货地址<br><span class="n">6</span></span></div></div>
<div class="c" style="left:1260px;top:501px;width:80px;height:113px"><div><span class="n">2024-04<br>-21 15:1<br>3:19</span></div></div>
<div class="c" style="left:1340px;top:501px;width:80px;height:113px"><div>已分配</div></div>
<div class="c" style="left:1420px;top:501px;width:80px;height:113px"><div>备注<span class="n">6</span></div></div>
<div class="c" style="left:1500px;top:501px;width:80px;height:113px"><div>未支付</div></div>
<div class="c" style="left:1580px;top:501px;width:80px;height:113px"><div></div></div>
</div>

<div class="a" style="left:878px;top:513px;height:20px;line-height:20px;font-family:'DejaVu Sans Mono','Liberation Mono',monospace;font-size:16.7px;color:#d3131c">www.bishebang.site</div>
<svg style="left:359px;top:788px" width="14" height="21" viewBox="0 0 14 21"><path d="M1.5 1.5V17.5L5.5 14 8 19.5 10.5 18.5 8 13 13 12.5z" fill="#fff" stroke="#222" stroke-width="1.1" stroke-linejoin="round"/></svg>
<div class="a" style="left:1673px;top:971px;width:237px;height:50px;border-radius:6px;background:#1b1b1b"></div>
<div class="a" style="left:1693px;top:985px;height:22px;line-height:22px;font-size:14.6px;color:#fff;font-weight:bold">03:45 / <span style="color:#9a9a9a;font-weight:normal">120:00</span></div>
<div class="a" style="left:1810px;top:981px;width:80px;height:30px;border-radius:4px;background:#f04b2c;color:#fff;font-size:13.7px;line-height:30px;text-align:center;font-weight:500">结束录制</div>
<div class="a" style="left:0;top:1026px;width:1916px;height:2px;background:#1e1e1e;z-index:6"></div>

</body>
</html>
